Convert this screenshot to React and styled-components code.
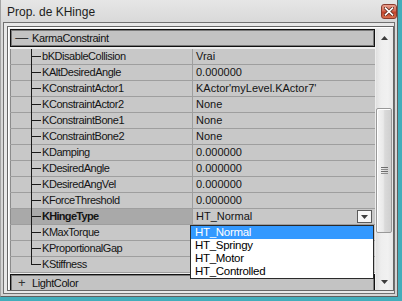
import React from 'react';
import styled, { createGlobalStyle, css } from 'styled-components';

const GlobalStyle = createGlobalStyle`
  html, body { margin: 0; padding: 0; }
  body {
    width: 402px;
    height: 301px;
    overflow: hidden;
    background: linear-gradient(180deg, #5c86a8 0, #c77a3c 120px, #3f9fb4 170px, #44b0bd 100%);
    font-family: "Liberation Sans", Arial, sans-serif;
  }
  #root { width: 402px; height: 301px; }
`;

const Desktop = styled.div`
  width: 402px;
  height: 301px;
  background: #43adbb;
`;

const Window = styled.div`
  width: 398px;
  height: 297px;
  box-sizing: border-box;
  display: flex;
  flex-direction: column;
  background: linear-gradient(180deg, #e6e6e6 0, #d9d9d9 22px, #d4d4d4 100%);
  border-left: 1px solid #a4a4a4;
  border-right: 1px solid #5e5e5e;
  border-bottom: 1px solid #5e5e5e;
`;

const TitleBar = styled.div`
  height: 22px;
  flex: none;
  display: flex;
  align-items: flex-start;
  padding-left: 6px;
`;

const Title = styled.span`
  font-size: 12px;
  line-height: 14px;
  margin-top: 5px;
  color: #1c1c1c;
`;

const CloseButton = styled.div`
  margin-left: auto;
  margin-top: 4px;
  width: 16px;
  height: 15px;
  box-sizing: border-box;
  border: 1px solid #8a3a2c;
  border-radius: 3px;
  background: linear-gradient(180deg, #e9a08f 0, #d46b55 45%, #c2422a 55%, #d9704f 100%);
  display: flex;
  align-items: center;
  justify-content: center;
`;

const Client = styled.div`
  flex: 1;
  display: flex;
  margin: 0 2px 2px 2px;
  padding: 3px 0 2px 3px;
  border: 1px solid #707070;
  background: #e8e8e8;
  min-height: 0;
`;

const Panel = styled.div`
  flex: 1;
  display: flex;
  padding: 2px 0 0 2px;
  border: 1px solid #666;
  background: #ededed;
  box-shadow: inset 1px 1px 0 #fff;
  min-height: 0;
  overflow: hidden;
`;

const Grid = styled.div`
  flex: 1;
  display: flex;
  flex-direction: column;
  margin-right: 1px;
`;

const Category = styled.div`
  height: 18px;
  flex: none;
  box-sizing: border-box;
  display: flex;
  align-items: center;
  border: 1px solid #111;
  box-shadow: inset 1px 1px 0 #7a7a7a, inset -1px -1px 0 #7a7a7a;
  background: #c3c3c3;
  font-size: 11px;
  letter-spacing: -0.4px;
  color: #111;
  margin-bottom: ${p => (p.$gap ? '2px' : '0')};
`;

const Expander = styled.span`
  width: 21px;
  text-align: center;
  font-size: 13px;
  line-height: 14px;
  color: #333;
`;

const PropRow = styled.div`
  position: relative;
  height: 16px;
  flex: none;
  box-sizing: border-box;
  display: flex;
  border-bottom: 1px solid #9e9e9e;
  background: #c8c8c8;
  font-size: 11px;
  line-height: 15px;
  color: #141414;
`;

const NameCell = styled.div`
  position: relative;
  width: 182px;
  box-sizing: border-box;
  border-left: 1px solid #8c8c8c;
  padding-left: 31px;
  letter-spacing: -0.45px;
  white-space: nowrap;
  ${p => p.$selected && css`
    background: #a9a9a9;
    font-weight: bold;
    letter-spacing: -0.7px;
  `}

  &::before {
    content: '';
    position: absolute;
    left: 20px;
    top: 0;
    width: 1px;
    height: ${p => (p.$last ? '8px' : '16px')};
    background: #1a1a1a;
  }

  &::after {
    content: '';
    position: absolute;
    left: 20px;
    top: 7px;
    width: 10px;
    height: 1px;
    background: #1a1a1a;
  }
`;

const ValueCell = styled.div`
  flex: 1;
  display: flex;
  align-items: flex-start;
  border-left: 1px solid #9e9e9e;
  padding-left: 3px;
  white-space: nowrap;
`;

const ComboText = styled.span`
  flex: 1;
`;

const ComboButton = styled.div`
  width: 15px;
  height: 13px;
  margin: 1px 3px 0 0;
  box-sizing: border-box;
  border: 1px solid #5a5a5a;
  background: #f6f6f6;
  display: flex;
  align-items: center;
  justify-content: center;
`;

const DropList = styled.div`
  position: absolute;
  left: 180px;
  top: 16px;
  width: 184px;
  box-sizing: border-box;
  border: 1px solid #2a2a2a;
  background: #fff;
  z-index: 2;
`;

const DropItem = styled.div`
  height: 13px;
  line-height: 13px;
  padding-left: 4px;
  font-size: 11.5px;
  letter-spacing: -0.3px;
  color: ${p => (p.$active ? '#fff' : '#000')};
  background: ${p => (p.$active ? '#3399ff' : 'transparent')};
`;

const ScrollBar = styled.div`
  width: 17px;
  flex: none;
  display: flex;
  flex-direction: column;
  background: linear-gradient(90deg, #e0e0e0 0, #eeeeee 30%, #f1f1f1 70%, #e6e6e6 100%);
`;

const ScrollArrow = styled.div`
  height: 17px;
  flex: none;
  display: flex;
  align-items: center;
  justify-content: center;
`;

const Track = styled.div`
  flex: 1;
  display: flex;
  flex-direction: column;
`;

const Thumb = styled.div`
  margin: 62px 1px 0 0;
  height: 125px;
  box-sizing: border-box;
  border: 1px solid #999;
  border-radius: 2px;
  background: linear-gradient(90deg, #f4f4f4 0, #e9e9e9 45%, #dadada 55%, #cfcfcf 100%);
  box-shadow: inset 1px 1px 0 #fff;
  display: flex;
  align-items: center;
  justify-content: center;
`;

const Arrow = ({ down }) => (
  <svg width="7" height="4" viewBox="0 0 7 4">
    <path d={down ? 'M0 0h7L3.5 4z' : 'M0 4h7L3.5 0z'} fill="#3c3c3c" />
  </svg>
);

const Grip = () => (
  <svg width="7" height="7" viewBox="0 0 7 7">
    {[0, 2, 4, 6].map(y => (
      <rect key={y} x="0" y={y} width="7" height="1" fill={y % 4 === 0 ? '#6d6d6d' : '#8a8a8a'} />
    ))}
  </svg>
);

const CloseX = () => (
  <svg width="10" height="9" viewBox="0 0 10 9">
    <path d="M1.5 1.2l7 6.6M8.5 1.2l-7 6.6" stroke="#5a2418" strokeWidth="3.2" strokeLinecap="square" />
    <path d="M1.5 1.2l7 6.6M8.5 1.2l-7 6.6" stroke="#fff" strokeWidth="1.6" strokeLinecap="square" />
  </svg>
);

const props = [
  { name: 'bKDisableCollision', value: 'Vrai' },
  { name: 'KAltDesiredAngle', value: '0.000000' },
  { name: 'KConstraintActor1', value: "KActor'myLevel.KActor7'" },
  { name: 'KConstraintActor2', value: 'None' },
  { name: 'KConstraintBone1', value: 'None' },
  { name: 'KConstraintBone2', value: 'None' },
  { name: 'KDamping', value: '0.000000' },
  { name: 'KDesiredAngle', value: '0.000000' },
  { name: 'KDesiredAngVel', value: '0.000000' },
  { name: 'KForceThreshold', value: '0.000000' },
  { name: 'KHingeType', value: 'HT_Normal', combo: true },
  { name: 'KMaxTorque', value: '' },
  { name: 'KProportionalGap', value: '' },
  { name: 'KStiffness', value: '' },
];

const options = ['HT_Normal', 'HT_Springy', 'HT_Motor', 'HT_Controlled'];

export default function App() {
  return (
    <Desktop>
      <GlobalStyle />
      <Window>
        <TitleBar>
          <Title>Prop. de KHinge</Title>
          <CloseButton><CloseX /></CloseButton>
        </TitleBar>
        <Client>
          <Panel>
            <Grid>
              <Category $gap>
                <Expander>—</Expander>
                KarmaConstraint
              </Category>
              {props.map((p, i) => (
                <PropRow key={p.name}>
                  <NameCell $selected={p.combo} $last={i === props.length - 1}>{p.name}</NameCell>
                  <ValueCell>
                    {p.combo ? (
                      <>
                        <ComboText>{p.value}</ComboText>
                        <ComboButton><Arrow down /></ComboButton>
                      </>
                    ) : p.value}
                  </ValueCell>
                  {p.combo && (
                    <DropList>
                      {options.map((o, j) => (
                        <DropItem key={o} $active={j === 0}>{o}</DropItem>
                      ))}
                    </DropList>
                  )}
                </PropRow>
              ))}
              <Category style={{ marginTop: 1 }}>
                <Expander>+</Expander>
                LightColor
              </Category>
            </Grid>
            <ScrollBar>
              <ScrollArrow><Arrow /></ScrollArrow>
              <Track>
                <Thumb><Grip /></Thumb>
              </Track>
              <ScrollArrow><Arrow down /></ScrollArrow>
            </ScrollBar>
          </Panel>
        </Client>
      </Window>
    </Desktop>
  );
}
